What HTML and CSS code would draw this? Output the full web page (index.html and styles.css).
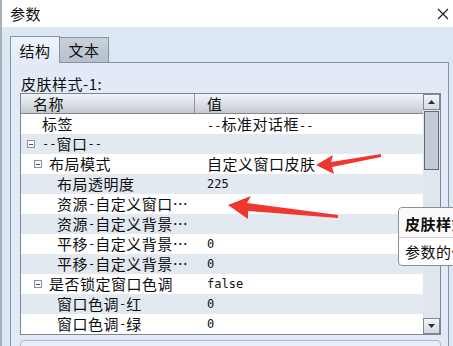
FILE: index.html
```html
<!DOCTYPE html>
<html lang="zh-CN">
<head>
<meta charset="utf-8">
<title>参数</title>
<link rel="stylesheet" href="styles.css">
</head>
<body>
<div class="window">
  <div class="titlebar">
    <span class="title">参数</span>
    <svg class="close" width="12" height="12" viewBox="0 0 12 12"><path d="M1 1L11 11M11 1L1 11" stroke="#1e1e1e" stroke-width="1.1" fill="none"/></svg>
  </div>
  <div class="body">
    <div class="tabs">
      <div class="tab active">结构</div>
      <div class="tab">文本</div>
    </div>
    <div class="panel">
      <div class="caption">皮肤样式-1:</div>
      <div class="table">
        <div class="grid">
          <div class="head"><div class="hc c1">名称</div><div class="hc c2">值</div></div>
          <div class="row"><div class="c1 lv-top">标签</div><div class="c2"><span class="m">--</span>标准对话框<span class="m">--</span></div></div>
          <div class="row alt"><div class="c1 lv0"><i class="box"></i><span class="m">--</span>窗口<span class="m">--</span></div><div class="c2"></div></div>
          <div class="row"><div class="c1 lv1"><i class="box"></i>布局模式</div><div class="c2">自定义窗口皮肤</div></div>
          <div class="row alt"><div class="c1 lv2">布局透明度</div><div class="c2 m">225</div></div>
          <div class="row"><div class="c1 lv2">资源<span class="m">-</span>自定义窗口…</div><div class="c2"></div></div>
          <div class="row alt"><div class="c1 lv2">资源<span class="m">-</span>自定义背景…</div><div class="c2"></div></div>
          <div class="row"><div class="c1 lv2">平移<span class="m">-</span>自定义背景…</div><div class="c2 m">0</div></div>
          <div class="row alt"><div class="c1 lv2">平移<span class="m">-</span>自定义背景…</div><div class="c2 m">0</div></div>
          <div class="row"><div class="c1 lv1"><i class="box"></i>是否锁定窗口色调</div><div class="c2 m">false</div></div>
          <div class="row alt"><div class="c1 lv2">窗口色调<span class="m">-</span>红</div><div class="c2 m">0</div></div>
          <div class="row"><div class="c1 lv2">窗口色调<span class="m">-</span>绿</div><div class="c2 m">0</div></div>
        </div>
        <div class="vscroll">
          <div class="sbtn"><svg width="7" height="4" viewBox="0 0 7 4"><path d="M0 4L3.5 0L7 4Z" fill="#2b2f35"/></svg></div>
          <div class="thumb"></div>
          <div class="track"></div>
          <div class="sbtn"><svg width="7" height="4" viewBox="0 0 7 4"><path d="M0 0L7 0L3.5 4Z" fill="#2b2f35"/></svg></div>
        </div>
      </div>
      <div class="nextbox"></div>
    </div>
  </div>
  <svg class="arrows" width="453" height="346" viewBox="0 0 453 346">
    <path d="M316 165L333 155L331 162L381 154L381 157L332 167L334 174Z" fill="#f0362e"/>
    <path d="M228 205L251 196L247 203L338 215L338 218L248 211L248 219Z" fill="#f0362e"/>
  </svg>
  <div class="tooltip">
    <div class="tt-head">皮肤样式</div>
    <div class="tt-body">参数的值</div>
  </div>
</div>
</body>
</html>
```
FILE: styles.css
```css
html, body {
  margin: 0;
  padding: 0;
  background: #dce7f4;
}
body {
  font-family: "Noto Sans CJK SC", "Noto Sans", sans-serif;
  color: #0e0e0e;
}
.window {
  position: relative;
  width: 453px;
  height: 346px;
  overflow: hidden;
  display: flex;
  flex-direction: column;
}
.titlebar {
  flex: none;
  height: 27px;
  box-sizing: border-box;
  border-left: 2px solid #a7afb8;
  background: #ffffff;
  display: flex;
  align-items: center;
  justify-content: space-between;
  padding: 0 4px 0 8px;
}
.title {
  font-size: 15px;
  letter-spacing: 0.5px;
  line-height: 20px;
}
.close {
  display: block;
}
.body {
  flex: 1;
  border-left: 2px solid #a7afb8;
  background: #dce7f4;
  padding: 9px 0 0 8px;
  min-height: 0;
}
.m {
  font-family: "DejaVu Sans Mono", monospace;
  font-size: 12px;
  letter-spacing: 0;
}
.tabs {
  display: flex;
  align-items: flex-end;
  height: 26px;
  font-size: 15px;
  letter-spacing: 0.5px;
}
.tab {
  box-sizing: border-box;
  width: 49px;
  height: 25px;
  line-height: 24px;
  text-align: center;
  border: 1px solid #8793a0;
  border-bottom: none;
  border-left: none;
  background: linear-gradient(#c9d1da, #b6c0cb);
}
.tab.active {
  position: relative;
  z-index: 1;
  width: 50px;
  height: 27px;
  margin-bottom: -1px;
  line-height: 28px;
  border-left: 1px solid #8793a0;
  background: linear-gradient(#eef4fb, #e1eaf6);
}
.panel {
  margin-right: 4px;
  height: 300px;
  border: 1px solid #8793a0;
  background: #e1eaf6;
  padding: 0 0 0 9px;
}
.caption {
  padding: 11px 0 0 1px;
  height: 19px;
  line-height: 19px;
  font-size: 15px;
  letter-spacing: 0.5px;
}
.table {
  display: flex;
  width: 421px;
  box-sizing: border-box;
  border: 1px solid #7b8793;
  background: #ffffff;
}
.grid {
  width: 402px;
  font-size: 15px;
  letter-spacing: 0.5px;
}
.head {
  display: flex;
  height: 19px;
  border-bottom: 1px solid #7b8793;
  background: linear-gradient(#f3f5f7, #d9dee4 55%, #c3cad2);
}
.hc {
  line-height: 19px;
}
.head .c1 {
  width: 161px;
  padding-left: 12px;
  border-right: 1px solid #8c96a1;
}
.head .c2 {
  padding-left: 12px;
}
.row {
  display: flex;
  height: 20px;
  line-height: 20px;
  background: #ffffff;
}
.row.alt {
  background: #e3e9f1;
}
.row .c1 {
  box-sizing: border-box;
  width: 174px;
  display: flex;
  align-items: center;
  white-space: nowrap;
  overflow: hidden;
}
.row .c2 {
  padding-left: 12px;
  white-space: nowrap;
}
.row .c2.m {
  font-size: 12px;
}
.lv-top { padding-left: 21px; }
.lv0 { padding-left: 6px; }
.lv1 { padding-left: 13px; }
.lv2 { padding-left: 36px; }
.box {
  position: relative;
  box-sizing: border-box;
  width: 8px;
  height: 8px;
  margin-right: 7px;
  border: 1px solid #8a929b;
  background: #fbfcfd;
  flex: none;
}
.box::after {
  content: "";
  position: absolute;
  left: 1px;
  right: 1px;
  top: 2.5px;
  height: 1px;
  background: #4b5159;
}
.vscroll {
  width: 17px;
  display: flex;
  flex-direction: column;
  background: #dfe6ee;
}
.sbtn {
  box-sizing: border-box;
  height: 16px;
  border: 1px solid #7c8894;
  background: linear-gradient(#f4f6f8, #d4dae1);
  display: flex;
  align-items: center;
  justify-content: center;
}
.thumb {
  box-sizing: border-box;
  height: 59px;
  margin: 1px 1px 0 1px;
  border: 1px solid #5f6b77;
  background: #c3ccd6;
}
.track {
  flex: 1;
}
.nextbox {
  margin-top: 5px;
  width: 419px;
  height: 20px;
  border: 1px solid #aebacb;
  border-radius: 4px;
  background: #e9eff7;
}
.arrows {
  position: absolute;
  top: 0;
  left: 0;
  pointer-events: none;
}
.tooltip {
  position: absolute;
  left: 398px;
  top: 207px;
  width: 90px;
  height: 57px;
  border: 1px solid #8f8f8f;
  border-radius: 4px;
  background: #ffffff;
  font-size: 15px;
  letter-spacing: 0.5px;
  white-space: nowrap;
}
.tt-head {
  height: 29px;
  line-height: 31px;
  padding-left: 6px;
  font-weight: bold;
  border-bottom: 1px solid #cfcfcf;
  background: #fafafa;
  border-radius: 4px 4px 0 0;
}
.tt-body {
  line-height: 27px;
  padding-left: 6px;
}
```
